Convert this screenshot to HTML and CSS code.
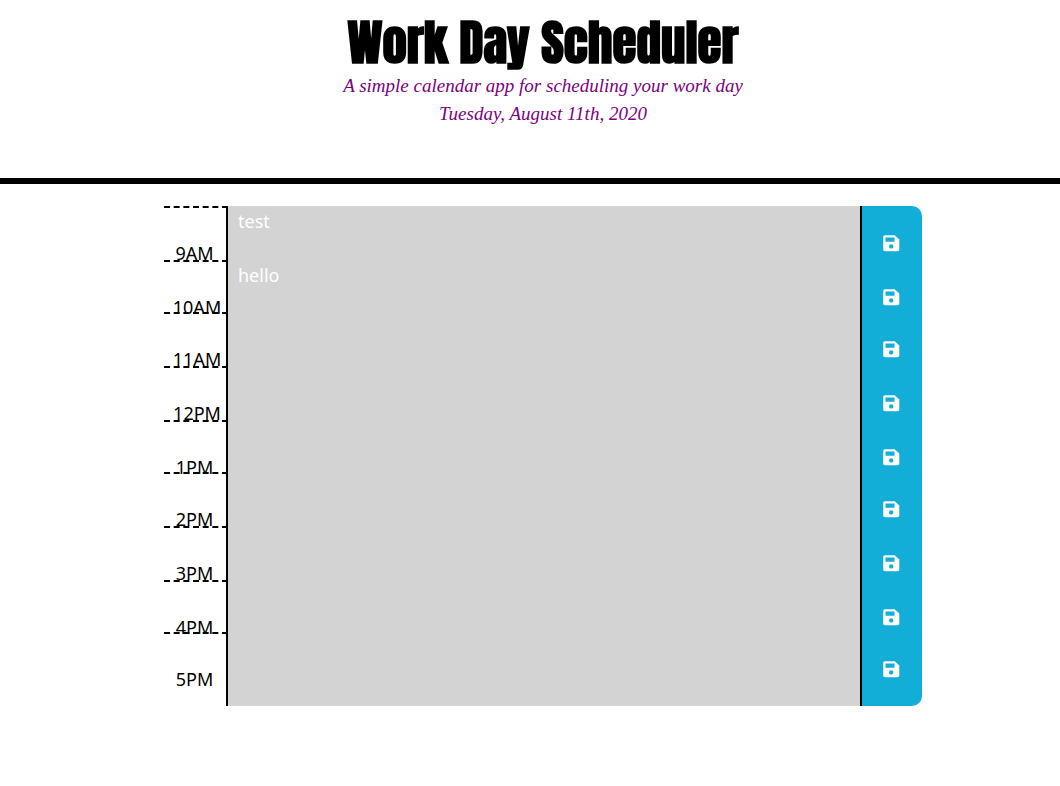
FILE: index.html
```html
<!DOCTYPE html>
<html lang="en">
<head>
<meta charset="utf-8">
<meta name="viewport" content="width=device-width, initial-scale=1">
<title>Work Day Scheduler</title>
<link rel="stylesheet" href="styles.css">
</head>
<body>
<header class="masthead">
<h1 class="title">Work Day Scheduler</h1>
<p class="lead">A simple calendar app for scheduling your work day</p>
<p class="lead">Tuesday, August 11th, 2020</p>
</header>
<main class="planner" id="planner"></main>
<script src="script.js"></script>
</body>
</html>
```
FILE: styles.css
```css
* { box-sizing: border-box; }

body {
  margin: 0;
  background: #fff;
  color: #000;
  font-family: "Noto Sans", sans-serif;
  font-size: 18px;
  line-height: 24px;
}

.masthead {
  padding: 14px 0 50px 26px;
  border-bottom: 6px solid #000;
  text-align: center;
}

.title {
  margin: 0 0 2px;
  font-family: Impact, Anton, "Liberation Sans Narrow", "DejaVu Sans Condensed", sans-serif;
  font-size: 49px;
  font-weight: 900;
  line-height: 56px;
}

.lead {
  margin: 0;
  color: #800080;
  font-family: "Z003", "URW Chancery L", "Apple Chancery", "Liberation Serif", cursive;
  font-size: 19px;
  font-style: italic;
  line-height: 28px;
}

.planner {
  padding: 22px 138px 80px 164px;
}

.row {
  display: grid;
  grid-template-columns: 64px 1fr 60px;
  height: 54px;
}

.row:nth-child(3n + 2) { height: 52px; }
.row:last-child { height: 74px; }

.hour {
  height: 100%;
  padding: 35px 3px 0 0;
  background: linear-gradient(#000, #000) right / 2px 100% no-repeat;
  text-align: center;
  white-space: nowrap;
  position: relative;
}

.hour-wide { padding: 35px 2px 0 4px; }

.dash {
  position: absolute;
  inset: 0 0 auto;
  border-top: 2px dashed #000;
}

.note {
  width: 100%;
  height: 100%;
  padding: 3px 10px;
  border: 0;
  border-right: 2px solid #000;
  border-radius: 0;
  background: #d3d3d3;
  color: #fff;
  font: inherit;
  resize: none;
  overflow: hidden;
  outline: 0;
}

.save {
  padding: 28px 2px 0 0;
  border: 0;
  background: #12aed7;
  color: #fff;
  display: flex;
  align-items: flex-start;
  justify-content: center;
  cursor: pointer;
}

.save:hover { color: #000; }
.row:first-child .save { border-top-right-radius: 10px; }
.row:last-child .save { border-bottom-right-radius: 10px; }

.icon {
  width: 18px;
  height: 18px;
  display: block;
}
```
FILE: script.js
```js
const notes = { "9AM": "test", "10AM": "hello" };
const hours = ["9AM", "10AM", "11AM", "12PM", "1PM", "2PM", "3PM", "4PM", "5PM"];

document.getElementById("planner").innerHTML = hours.map((hour) => `
  <div class="row">
    <label class="hour${hour.length > 3 ? " hour-wide" : ""}" for="note-${hour}"><span class="dash"></span>${hour}</label>
    <textarea class="note" id="note-${hour}">${notes[hour] || ""}</textarea>
    <button class="save" type="button" aria-label="Save ${hour}">
      <svg class="icon" viewBox="0 0 18 18" aria-hidden="true">
        <path fill="currentColor" fill-rule="evenodd" d="M3 1.200H12.600L17.300 5.500V15.500Q17.300 17.300 15.500 17.300H3Q1.200 17.300 1.200 15.500V3Q1.200 1.200 3 1.200ZM3.500 3.500V7.700H12.500V3.500ZM9.200 10.200A2.200 2.200 0 1 0 9.200 14.600A2.200 2.200 0 1 0 9.200 10.200Z"/>
      </svg>
    </button>
  </div>`).join("");
```
